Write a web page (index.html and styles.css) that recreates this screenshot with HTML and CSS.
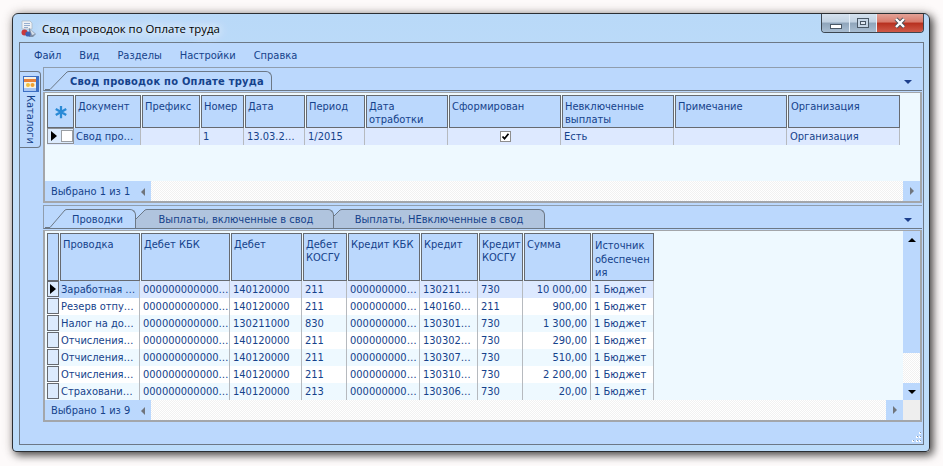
FILE: index.html
```html
<!DOCTYPE html>
<html lang="ru">
<head>
  <meta charset="UTF-8" />
  <title>Свод проводок по Оплате труда</title>
  <link rel="stylesheet" href="styles.css">
</head>
<body>
  <div class="window">
    <div class="titlebar">
      <svg class="app-icon" width="18" height="18" viewBox="0 0 18 18">
        <path d="M2 1h8l2 2v6H2z" fill="#eef2f6" stroke="#a9b4c0" stroke-width="0.7"/>
        <path d="M4 3.5h6M4 5.5h6M4 7.5h4" stroke="#7f9cc4" stroke-width="0.8"/>
        <path d="M9 8l7 6-3 3H9z" fill="#7d8fa6"/>
        <path d="M10 9l5 5-3 1z" fill="#d5dfea"/>
        <circle cx="4.5" cy="12.5" r="3" fill="#c8383c"/>
        <circle cx="8" cy="14" r="2.6" fill="#3c62b4"/>
      </svg>
      <span class="title-text">Свод проводок по Оплате труда</span>
      <div class="controls">
        <div class="ctl ctl-min"><span class="min-glyph"></span></div>
        <div class="ctl ctl-max"><span class="max-glyph"></span></div>
        <div class="ctl ctl-close">
          <svg width="14" height="12" viewBox="0 0 14 12"><path d="M3 2l8 8M11 2l-8 8" stroke="#4a5058" stroke-width="4"/><path d="M3 2l8 8M11 2l-8 8" stroke="#fff" stroke-width="2.4"/></svg>
        </div>
      </div>
    </div>

    <div class="client">
      <div class="menu">
        <span class="menu-item">Файл</span>
        <span class="menu-item">Вид</span>
        <span class="menu-item">Разделы</span>
        <span class="menu-item">Настройки</span>
        <span class="menu-item">Справка</span>
      </div>

      <div class="workspace">
        <div class="sidebar">
          <div class="side-tab">
            <svg width="16" height="16" viewBox="0 0 16 16">
              <rect width="16" height="16" fill="#3d6fc4"/>
              <rect x="1" y="1" width="12" height="14" fill="#f6f2e6"/>
              <rect x="1" y="3" width="12" height="3" fill="#e8813a"/>
              <circle cx="5" cy="9" r="2" fill="#f0c040"/>
              <circle cx="9.5" cy="9" r="2" fill="#f0a030"/>
              <rect x="1" y="12" width="12" height="3" fill="#a9c6f2"/>
            </svg>
            <span class="side-label">Каталоги</span>
          </div>
        </div>

        <div class="main">
          <div class="tabstrip">
            <div class="tab">
              <svg class="slant" width="24" height="19" viewBox="0 0 24 19"><path d="M0 18.5h5L22 1q1-.5 2-.5V19H0z" fill="#bbd8fd"/><path d="M0 18.5h5L22 1q1-.5 2-.5" fill="none" stroke="#6c7886"/></svg>
              <div class="tab-body tab-main">Свод проводок по Оплате труда</div>
            </div>
            <i class="chevron"></i>
          </div>

          <div class="pane pane-top">
            <div class="grid-top">
              <div class="row row-head">
                <div class="head head-first">
                  <svg width="14" height="14" viewBox="0 0 16 16"><path d="M8 1v14M2 4.5l12 7M14 4.5l-12 7" stroke="#2a8ad6" stroke-width="2.6"/></svg>
                </div>
                <div class="head">Документ</div>
                <div class="head">Префикс</div>
                <div class="head">Номер</div>
                <div class="head">Дата</div>
                <div class="head">Период</div>
                <div class="head">Дата отработки</div>
                <div class="head">Сформирован</div>
                <div class="head">Невключенные выплаты</div>
                <div class="head">Примечание</div>
                <div class="head">Организация</div>
              </div>
              <div class="row row-sel">
                <div class="indicator indicator-wide"><i class="pointer"></i><span class="box"></span></div>
                <div class="cell cell-focus">Свод про…</div>
                <div class="cell"></div>
                <div class="cell">1</div>
                <div class="cell">13.03.2…</div>
                <div class="cell">1/2015</div>
                <div class="cell"></div>
                <div class="cell cell-center">
                  <svg class="check" width="11" height="11" viewBox="0 0 11 11"><rect x="0.5" y="0.5" width="10" height="10" fill="#fff" stroke="#8e8e8e"/><path d="M2.5 5.5l2 2.2 4-5" fill="none" stroke="#000" stroke-width="1.8"/></svg>
                </div>
                <div class="cell">Есть</div>
                <div class="cell"></div>
                <div class="cell">Организация</div>
              </div>
            </div>
            <div class="fill"></div>
            <div class="footer">
              <div class="footer-nav">Выбрано 1 из 1<i class="arrow-left"></i></div>
              <div class="dither"></div>
              <div class="scroll-btn"><i class="arrow-right"></i></div>
            </div>
          </div>

          <div class="tabstrip tabstrip-lower">
            <div class="tab">
              <svg class="slant" width="22" height="19" viewBox="0 0 22 19"><path d="M0 18.5h5L20 1q1-.5 2-.5V19H0z" fill="#bbd8fd"/><path d="M0 18.5h5L20 1q1-.5 2-.5" fill="none" stroke="#6c7886"/></svg>
              <div class="tab-body tab-first">Проводки</div>
            </div>
            <div class="tab">
              <svg class="slant" width="11" height="19" viewBox="0 0 11 19"><path d="M0 10L9 1q1-.5 2-.5V19H0z" fill="#b0c4de"/><path d="M0 10L9 1q1-.5 2-.5" fill="none" stroke="#6c7886"/></svg>
              <div class="tab-body tab-back tab-second">Выплаты, включенные в свод</div>
            </div>
            <div class="tab">
              <svg class="slant" width="8" height="19" viewBox="0 0 8 19"><path d="M0 7L6 1q1-.5 2-.5V19H0z" fill="#b0c4de"/><path d="M0 7L6 1q1-.5 2-.5" fill="none" stroke="#6c7886"/></svg>
              <div class="tab-body tab-back tab-third">Выплаты, НЕвключенные в свод</div>
            </div>
            <i class="chevron"></i>
          </div>

          <div class="pane pane-lower">
            <div class="lower-body">
              <div class="grid-lower">
                <div class="row row-head">
                  <div class="head head-first"></div>
                  <div class="head">Проводка</div>
                  <div class="head">Дебет КБК</div>
                  <div class="head">Дебет</div>
                  <div class="head">Дебет КОСГУ</div>
                  <div class="head">Кредит КБК</div>
                  <div class="head">Кредит</div>
                  <div class="head">Кредит КОСГУ</div>
                  <div class="head">Сумма</div>
                  <div class="head head-narrow">Источник обеспечен ия</div>
                </div>
                <div class="row row-sel">
                  <div class="indicator"><i class="pointer"></i></div>
                  <div class="cell cell-focus">Заработная …</div>
                  <div class="cell">000000000000…</div>
                  <div class="cell">140120000</div>
                  <div class="cell">211</div>
                  <div class="cell">000000000…</div>
                  <div class="cell">130211…</div>
                  <div class="cell">730</div>
                  <div class="cell cell-num">10 000,00</div>
                  <div class="cell">1 Бюджет</div>
                </div>
                <div class="row row-white">
                  <div class="indicator"></div>
                  <div class="cell cell-name">Резерв отпу…</div>
                  <div class="cell">000000000000…</div>
                  <div class="cell">140120000</div>
                  <div class="cell">211</div>
                  <div class="cell">000000000…</div>
                  <div class="cell">140160…</div>
                  <div class="cell">211</div>
                  <div class="cell cell-num">900,00</div>
                  <div class="cell">1 Бюджет</div>
                </div>
                <div class="row row-alt">
                  <div class="indicator"></div>
                  <div class="cell cell-name">Налог на до…</div>
                  <div class="cell">000000000000…</div>
                  <div class="cell">130211000</div>
                  <div class="cell">830</div>
                  <div class="cell">000000000…</div>
                  <div class="cell">130301…</div>
                  <div class="cell">730</div>
                  <div class="cell cell-num">1 300,00</div>
                  <div class="cell">1 Бюджет</div>
                </div>
                <div class="row row-white">
                  <div class="indicator"></div>
                  <div class="cell cell-name">Отчисления…</div>
                  <div class="cell">000000000000…</div>
                  <div class="cell">140120000</div>
                  <div class="cell">211</div>
                  <div class="cell">000000000…</div>
                  <div class="cell">130302…</div>
                  <div class="cell">730</div>
                  <div class="cell cell-num">290,00</div>
                  <div class="cell">1 Бюджет</div>
                </div>
                <div class="row row-alt">
                  <div class="indicator"></div>
                  <div class="cell cell-name">Отчисления…</div>
                  <div class="cell">000000000000…</div>
                  <div class="cell">140120000</div>
                  <div class="cell">211</div>
                  <div class="cell">000000000…</div>
                  <div class="cell">130307…</div>
                  <div class="cell">730</div>
                  <div class="cell cell-num">510,00</div>
                  <div class="cell">1 Бюджет</div>
                </div>
                <div class="row row-white">
                  <div class="indicator"></div>
                  <div class="cell cell-name">Отчисления…</div>
                  <div class="cell">000000000000…</div>
                  <div class="cell">140120000</div>
                  <div class="cell">211</div>
                  <div class="cell">000000000…</div>
                  <div class="cell">130310…</div>
                  <div class="cell">730</div>
                  <div class="cell cell-num">2 200,00</div>
                  <div class="cell">1 Бюджет</div>
                </div>
                <div class="row row-alt">
                  <div class="indicator"></div>
                  <div class="cell cell-name">Страховани…</div>
                  <div class="cell">000000000000…</div>
                  <div class="cell">140120000</div>
                  <div class="cell">213</div>
                  <div class="cell">000000000…</div>
                  <div class="cell">130306…</div>
                  <div class="cell">730</div>
                  <div class="cell cell-num">20,00</div>
                  <div class="cell">1 Бюджет</div>
                </div>
              </div>
              <div class="vscroll">
                <div class="vscroll-thumb"><i class="arrow-up"></i></div>
                <div class="dither"></div>
                <div class="vscroll-btn"><i class="arrow-down"></i></div>
              </div>
            </div>
            <div class="footer">
              <div class="footer-nav">Выбрано 1 из 9<i class="arrow-left"></i></div>
              <div class="dither"></div>
              <div class="scroll-btn"><i class="arrow-right"></i></div>
              <div class="corner"></div>
            </div>
          </div>

          <div class="statusbar">
            <svg width="12" height="12" viewBox="0 0 12 12">
              <path d="M9 1h2v2H9zM6 5h2v2H6zM9 5h2v2H9zM2 9h2v2H2zM6 9h2v2H6zM9 9h2v2H9z" fill="#fff"/>
              <path d="M10 1h1v1h-1zM7 5h1v1H7zM10 5h1v1h-1zM3 9h1v1H3zM7 9h1v1H7zM10 9h1v1h-1z" fill="#8b98a8"/>
            </svg>
          </div>
        </div>
      </div>
    </div>
  </div>
</body>
</html>
```

FILE: styles.css
```css
:root {
  --panel: #bbd8fd;
  --line: #6c7886;
  --line-soft: #a3a6aa;
  --head-line: #666a70;
  --text: #15428b;
  --row-alt: #eef9ff;
  --row-sel: #dde9ff;
}
* { box-sizing: border-box; margin: 0; padding: 0; }
html, body { height: 100%; overflow: hidden; }
body {
  background: #fdfafa;
  padding: 13px 0 0 12px;
  font-family: "DejaVu Sans Condensed", "DejaVu Sans", sans-serif;
  font-size: 11px;
  color: var(--text);
}
.window {
  width: 918px;
  height: 439px;
  display: flex;
  flex-direction: column;
  border: 1px solid #2b2f33;
  border-radius: 6px 6px 4px 4px;
  background: linear-gradient(180deg, #b9d9f8 0, #c2dff9 40%, #bcdcfa 100%);
  box-shadow: 3px 3px 9px rgba(0,0,0,0.7), 0 0 12px rgba(60,40,30,0.2);
  padding: 0 5px 6px 6px;
}

/* title bar */
.titlebar { height: 28px; flex: none; display: flex; align-items: center; position: relative; }
.app-icon { margin: 2px 4px 0 1px; }
.title-text {
  font-family: "Open Sans", sans-serif;
  font-size: 11.4px;
  color: #000;
  text-shadow: 0 0 8px #fff, 0 0 12px #fff, 0 0 16px #fff;
  margin-top: 1px;
}
.controls {
  margin-left: auto;
  align-self: flex-start;
  display: flex;
  height: 19px;
  border: 1px solid #3c4650;
  border-top: none;
  border-radius: 0 0 4px 4px;
  overflow: hidden;
}
.ctl { display: flex; align-items: center; justify-content: center; border-right: 1px solid #e4eef8; }
.ctl-min { width: 28px; background: linear-gradient(180deg, #d5e2ef 0, #c2d2e2 45%, #8fa5bb 50%, #a9bed2 100%); }
.ctl-max { width: 27px; background: linear-gradient(180deg, #d5e2ef 0, #c2d2e2 45%, #8fa5bb 50%, #a9bed2 100%); }
.ctl-close { width: 46px; border-right: none; background: linear-gradient(180deg, #e3a297 0, #d87a6b 45%, #b7301f 50%, #cf5a48 100%); }
.min-glyph { width: 12px; height: 5px; margin-top: 7px; background: #fff; border: 1px solid #4a5866; }
.max-glyph { width: 12px; height: 10px; background: #dfe8f2; border: 1px solid #4a5866; box-shadow: inset 0 0 0 2px #c6d6e6, inset 0 0 0 3px #4a5866; }

/* client */
.client {
  flex: 1;
  display: flex;
  flex-direction: column;
  border: 1px solid var(--line);
  background: var(--panel);
}
.menu { height: 24px; flex: none; display: flex; align-items: center; padding-left: 14px; gap: 18px; }
.menu-item { font-size: 11px; }
.workspace { flex: 1; display: flex; }
.sidebar { width: 23px; flex: none; padding-top: 4px; }
.side-tab {
  width: 21px;
  height: 77px;
  display: flex;
  flex-direction: column;
  align-items: center;
  padding: 4px 0 0 1px;
  border: 1px solid var(--line);
  border-left: none;
  border-radius: 0 4px 4px 0;
}
.side-label { writing-mode: vertical-rl; margin-top: 3px; color: var(--text); }
.main { width: 879px; flex: none; display: flex; flex-direction: column; }

/* tabs */
.tabstrip {
  height: 24px;
  flex: none;
  display: flex;
  align-items: flex-end;
  padding-left: 1px;
  margin-bottom: 1px;
  border-top: 1px solid #8f9dad;
  border-left: 1px solid #8f9dad;
  border-bottom: 1px solid var(--line);
  position: relative;
}
.tabstrip-lower { margin-top: 2px; }
.tab { display: flex; height: 19px; }
.slant { flex: none; display: block; }
.tab-body {
  display: flex;
  align-items: center;
  justify-content: center;
  background: var(--panel);
  border-top: 1px solid var(--line);
  border-right: 1px solid var(--line);
  border-radius: 0 6px 0 0;
}
.tab-main { width: 203px; font-weight: bold; font-size: 11px; letter-spacing: 0.25px; padding-right: 6px; }
.tab-first { width: 69px; padding-right: 7px; }
.tab-second { width: 187px; padding-right: 8px; }
.tab-third { width: 203px; padding-right: 8px; }
.tab-back { background: #b0c4de; }
.chevron {
  position: absolute;
  right: 10px;
  top: 12px;
  border-left: 4px solid transparent;
  border-right: 4px solid transparent;
  border-top: 4px solid #1d3f8c;
}

/* panes */
.pane {
  flex: none;
  display: flex;
  flex-direction: column;
  border: 2px solid var(--line-soft);
  border-top: 1px solid var(--line-soft);
  background: var(--row-alt);
}
.pane-top { height: 111px; }
.pane-lower { height: 192px; }
.grid-top, .grid-lower { padding: 2px 0 0 2px; flex: none; }
.row { display: grid; height: 17px; line-height: 18px; }
.grid-top .row { grid-template-columns: 27px 67px 59px 44px 61px 60px 83px 113px 113px 113px 113px; width: 853px; }
.grid-lower .row { grid-template-columns: 12px 81px 90px 72px 45px 73px 58px 45px 68px 63px; width: 607px; }
.grid-top .row-head { height: 33px; }
.grid-lower .row-head { height: 48px; }
.head {
  margin-left: 1px;
  padding: 4px 2px 0 2px;
  line-height: 13px;
  background: var(--panel);
  border: 1px solid var(--head-line);
}
.head-first { margin-left: 0; display: flex; align-items: center; justify-content: center; padding: 0; }
.head-narrow { padding-top: 5px; line-height: 13.5px; }
.cell {
  padding-left: 3px;
  white-space: nowrap;
  overflow: hidden;
  border-right: 1px solid #b6babf;
}
.cell-focus, .cell-name { padding-left: 2px; }
.cell-focus { background: var(--panel); }
.cell-center { display: flex; align-items: center; justify-content: center; }
.cell-num { text-align: right; padding: 0 3px 0 0; }
.row-sel { background: var(--row-sel); }
.row-white { background: #fff; }
.row-alt { background: var(--row-alt); }
.indicator {
  display: flex;
  align-items: center;
  height: 16px;
  padding-left: 3px;
  gap: 3px;
  background: #dcebfd;
  border: 1px solid var(--head-line);
}
.indicator-wide { border-color: #8d9197; }
.pointer {
  border-top: 5px solid transparent;
  border-bottom: 5px solid transparent;
  border-left: 6px solid #000;
}
.grid-lower .pointer { margin-left: -1px; }
.box { width: 12px; height: 12px; background: #fff; border: 1px solid #9a9ea3; margin-left: 1px; }
.fill { flex: 1; }
.check { display: block; }

/* footers and scroll bars */
.footer { height: 20px; flex: none; display: flex; align-items: stretch; }
.footer-nav {
  width: 106px;
  flex: none;
  display: flex;
  align-items: center;
  justify-content: space-between;
  padding: 1px 6px 0 6px;
  background: var(--panel);
}
.dither {
  flex: 1;
  background: repeating-conic-gradient(#ffffff 0 25%, #f1f1f1 0 50%) 0 0 / 2px 2px;
}
.scroll-btn, .vscroll-btn { width: 17px; flex: none; display: flex; align-items: center; justify-content: center; background: var(--panel); }
.corner { width: 17px; flex: none; background: #eeeeee; }
.lower-body { flex: 1; display: flex; min-height: 0; }
.grid-lower { flex: 1; }
.vscroll { width: 17px; flex: none; display: flex; flex-direction: column; }
.vscroll-thumb { height: 122px; flex: none; display: flex; justify-content: center; padding-top: 7px; background: var(--panel); }
.vscroll-btn { height: 17px; }
.arrow-left { border-top: 4px solid transparent; border-bottom: 4px solid transparent; border-right: 4px solid #70757c; }
.arrow-right { border-top: 4px solid transparent; border-bottom: 4px solid transparent; border-left: 4px solid #70757c; }
.arrow-up { height: 0; border-left: 4px solid transparent; border-right: 4px solid transparent; border-bottom: 4px solid #000; }
.arrow-down { border-left: 4px solid transparent; border-right: 4px solid transparent; border-top: 4px solid #000; }
.statusbar { flex: 1; display: flex; justify-content: flex-end; align-items: flex-end; padding: 0 0 1px 0; }
```
